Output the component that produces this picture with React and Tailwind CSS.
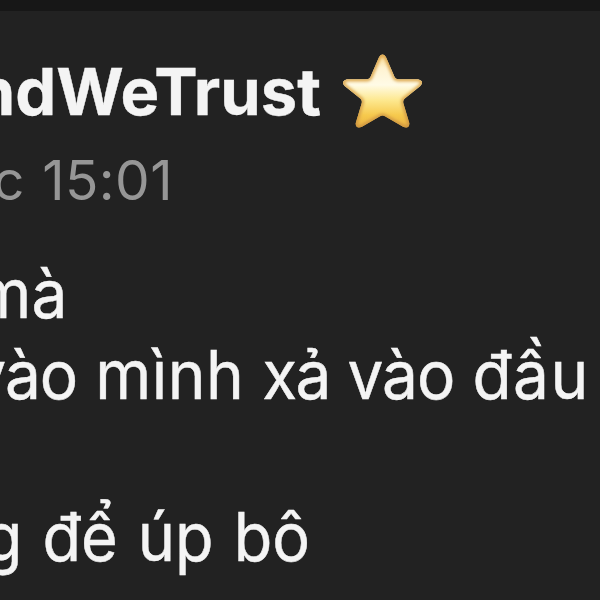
function Star() {
  return (
    <svg width="80" height="76" viewBox="0 0 82 78" preserveAspectRatio="none" className="shrink-0" aria-hidden="true">
      <defs>
        <linearGradient id="starFill" x1="0" y1="0" x2="0" y2="1">
          <stop offset="0" stopColor="#f9d78c" />
          <stop offset="0.2" stopColor="#fff3d2" />
          <stop offset="0.42" stopColor="#fffbe6" />
          <stop offset="0.62" stopColor="#fde88f" />
          <stop offset="0.82" stopColor="#f6c94d" />
          <stop offset="1" stopColor="#eab042" />
        </linearGradient>
        <linearGradient id="starEdge" x1="0" y1="0" x2="0" y2="1">
          <stop offset="0" stopColor="#dda64e" />
          <stop offset="0.5" stopColor="#dfae58" />
          <stop offset="1" stopColor="#cf963f" />
        </linearGradient>
        <filter id="soft" x="-10%" y="-10%" width="120%" height="120%">
          <feGaussianBlur stdDeviation="1.6" />
        </filter>
        <clipPath id="starClip">
          <path d="M37 4Q40.500-1 44 4L53 25Q54 27 57 27L77 27Q84 29 79 34L63 47Q61 49 62 52L68 72Q68 78 62 76L43 65Q40.500 63.500 38 65L19 76Q13 78 13 72L19 52Q20 49 18 47L2 34Q-3 29 4 27L24 27Q27 27 28 25Z" />
        </clipPath>
      </defs>
      <g clipPath="url(#starClip)">
        <rect width="82" height="78" fill="url(#starFill)" />
        <path d="M37 4Q40.500-1 44 4L53 25Q54 27 57 27L77 27Q84 29 79 34L63 47Q61 49 62 52L68 72Q68 78 62 76L43 65Q40.500 63.500 38 65L19 76Q13 78 13 72L19 52Q20 49 18 47L2 34Q-3 29 4 27L24 27Q27 27 28 25Z" fill="none" stroke="url(#starEdge)" strokeWidth="4.500" filter="url(#soft)" />
      </g>
    </svg>
  );
}

export default function App() {
  return (
    <main className="h-[600px] w-[600px] overflow-hidden bg-[#222222] font-['Inter',sans-serif] text-[#f4f4f4]">
      <div className="h-[11px] bg-[#171717]" />
      <header className="flex h-[162px] flex-col pt-[41px]">
        <div className="flex h-20 items-center">
          <div className="flex w-[321px] shrink-0 justify-end">
            <h1 className="whitespace-nowrap text-[65px] leading-[80px] font-bold [-webkit-text-stroke:0.4px_#f4f4f4]">ndWeTrust</h1>
          </div>
          <div className="mb-[3px] ml-[22px]"><Star /></div>
        </div>
        <div className="mt-[18px] flex w-[173px] shrink-0 justify-end">
          <time className="whitespace-nowrap text-[55px] leading-[60px] tracking-[0.4px] text-[#969696] [word-spacing:1.500px]">c 15:01</time>
        </div>
      </header>
      <section className="mt-[80px] text-[67px] leading-[81px] whitespace-nowrap [-webkit-text-stroke:0.5px_#f4f4f4]">
        <div className="flex w-[67px] justify-end"><p className="origin-right scale-x-[0.955]">mà</p></div>
        <div className="flex w-[590px] justify-end">
          <p className="origin-right scale-x-[0.955]">
            <span className="tracking-[-1px]">vào</span> <span className="tracking-[0.5px]">mình</span>{" "}
            <span className="tracking-[-2px]">xả</span> <span className="tracking-[-1px]">vào</span>{" "}
            <span className="tracking-[1.500px]">đầu</span>
          </p>
        </div>
        <div className="h-[81px]" />
        <div className="flex w-[310px] justify-end"><p className="origin-right scale-x-[0.94] [word-spacing:2.500px]">g để úp bô</p></div>
      </section>
    </main>
  );
}
